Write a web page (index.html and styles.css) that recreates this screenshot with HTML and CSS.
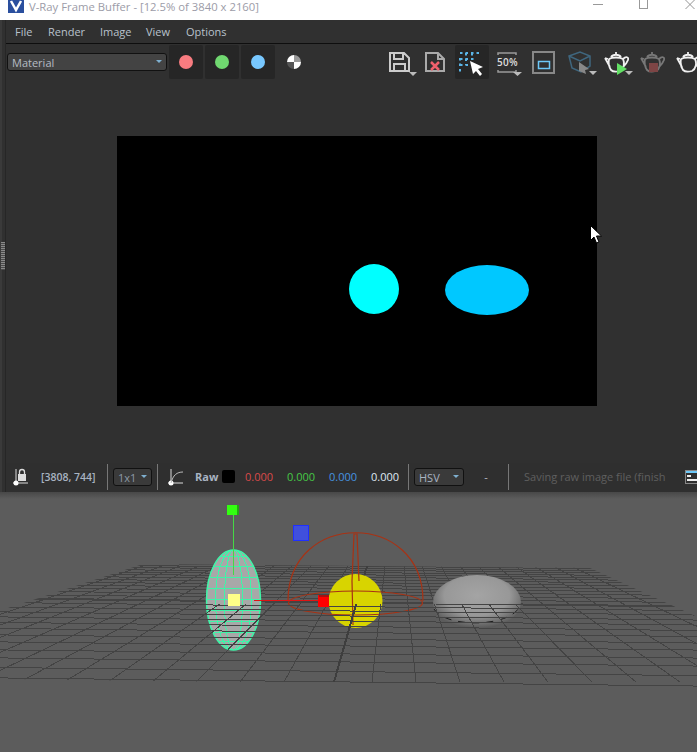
FILE: index.html
```html
<!DOCTYPE html>
<html lang="en">
<head>
<meta charset="utf-8">
<title>V-Ray Frame Buffer</title>
<link rel="stylesheet" href="styles.css">
</head>
<body>
<svg class="defs" width="0" height="0">
	<symbol id="teapot" viewBox="0 0 34 34">
		<path d="M10 14C13 12 21 12 24 14 26 18 25 24 21 26 17 27 14 27 12 25 10 22 9 19 10 14M12 12C14 9 20 9 22 12M17 7v2M6 13l3 1M6 13l5 9M24 14C27 11 30 12 29 15 28 18 26 20 24 22" fill="none" stroke="currentColor" stroke-width="1.800"/>
	</symbol>
	<clipPath id="floor"><polygon points="143,564 590,568 856,690 -200,676"/></clipPath>
	<clipPath id="front"><rect x="0" y="604" width="697" height="148"/></clipPath>
	<clipPath id="egg"><ellipse cx="233.500" cy="600" rx="27" ry="50"/></clipPath>
	<radialGradient id="stone" cx="0.5" cy="0.38" r="0.62">
		<stop offset="0" stop-color="#a4a4a4"/>
		<stop offset="0.6" stop-color="#989898"/>
		<stop offset="1" stop-color="#555"/>
	</radialGradient>
	<g id="grid" clip-path="url(#floor)" fill="none" stroke="#444" shape-rendering="crispEdges">
		<path d="M-10 677.800L710 686.200M-10 667.400L710 675.800M-10 657.800L710 666.200M-10 649.800L710 658.200M-10 641.800L710 650.200M-10 634.800L710 643.200M-10 628.300L710 636.700M-10 622.300L710 630.700M-10 616.800L710 625.200M-10 611.800L710 620.200M-10 606.800L710 615.200M-10 602.400L710 610.800M-10 594.400L710 602.800M-10 590.800L710 599.200M-10 587.400L710 595.800M-10 584.200L710 592.600M-10 581.200L710 589.600M-10 578.300L710 586.700M-10 575.500L710 583.900M-10 572.800L710 581.200M-10 570.500L710 578.900M-10 568.200L710 576.600M-10 565.800L710 574.200M-10 563.800L710 572.200M-10 561.800L710 570.200"/>
		<path d="M-200 682L143 566M-156 682L162 566M-112 682L180 566M-68 682L199 566M-24 682L218 566M20 682L236 566M64 682L255 566M108 682L274 566M152 682L292 566M196 682L311 566M240 682L329 566M284 682L348 566M372 682L385 566M416 682L404 566M460 682L422 566M504 682L441 566M548 682L460 566M592 682L478 566M636 682L497 566M680 682L515 566M724 682L534 566M768 682L553 566M812 682L571 566M856 682L590 566"/>
		<path d="M-10 598.300L710 606.700" stroke-width="2"/>
		<path d="M334 682L367 566" stroke-width="2" stroke="#3e3e3e"/>
	</g>
</svg>

<div class="titlebar">
	<svg class="app_logo" viewBox="0 0 16 13"><rect width="16" height="13" fill="#2a4f9e"/><path d="M3 1l5 9 5-9" fill="none" stroke="#fff" stroke-width="2.500"/></svg>
	<span class="title_text">V-Ray Frame Buffer - [12.5% of 3840 x 2160]</span>
	<div class="win_btns">
		<span class="win_min"></span>
		<span class="win_max"></span>
		<svg class="win_close" viewBox="0 0 10 10"><path d="M0 0l10 10M10 0L0 10" stroke="#888" fill="none"/></svg>
	</div>
</div>

<div class="vfb">
	<div class="side"><span class="grip"></span></div>
	<div class="main">
		<ul class="menu">
			<li>File</li>
			<li>Render</li>
			<li>Image</li>
			<li>View</li>
			<li>Options</li>
		</ul>

		<div class="toolbar">
			<div class="select select_channel">Material<i class="caret"></i></div>
			<div class="btn on"><span class="dot dot_r"></span></div>
			<div class="btn on"><span class="dot dot_g"></span></div>
			<div class="btn on"><span class="dot dot_b"></span></div>
			<div class="btn"><span class="dot dot_mono"></span></div>
			<div class="spacer"></div>

			<!-- save -->
			<div class="btn"><svg class="ico" viewBox="0 0 34 34">
				<path d="M7 8h14l5 5v13H7zM11 8v6h9V8M11 26v-7h11v7" fill="none" stroke="#ccc" stroke-width="2"/>
				<path d="M26 27h8l-4 4z" fill="#bbb"/>
			</svg></div>
			<!-- clear -->
			<div class="btn"><svg class="ico" viewBox="0 0 34 34">
				<path d="M7 8h12l6 6v12H7zM19 8v6h6" fill="none" stroke="#aaa" stroke-width="2"/>
				<path d="M12 17l8 8M20 17l-8 8" stroke="#f0606c" stroke-width="2.500"/>
			</svg></div>
			<!-- region -->
			<div class="btn on"><svg class="ico" viewBox="0 0 34 34">
				<path d="M5 8h22M5 13v15M11 8v12M17 8v6M5 14h15M5 20h8" fill="none" stroke="#5ab4e6" stroke-width="2" stroke-dasharray="2.500 3"/>
				<path d="M15 16l13 6-5 2 4 5-2 2-4-5-3 3z" fill="#fff"/>
			</svg></div>
			<!-- 50% -->
			<div class="btn"><svg class="ico" viewBox="0 0 34 34">
				<path d="M7 10V8h18v2M7 25v2h18v-2" fill="none" stroke="#999" stroke-width="1.500"/>
				<text x="6" y="21" class="ico_text">50%</text>
				<path d="M22 27h9l-4.500 4z" fill="#bbb"/>
			</svg></div>
			<!-- render region -->
			<div class="btn"><svg class="ico" viewBox="0 0 34 34">
				<rect x="6" y="7" width="21" height="21" fill="none" stroke="#888" stroke-width="2"/>
				<rect x="11.500" y="16.500" width="11" height="7" fill="none" stroke="#6cc8f8" stroke-width="1.500"/>
			</svg></div>
			<!-- cube -->
			<div class="btn"><svg class="ico" viewBox="0 0 34 34">
				<path d="M6 11l11-4 10 4v10l-9 6-9-4zM6 11l11 5 10-5" fill="none" stroke="#3f667e" stroke-width="1.500"/>
				<path d="M16 17l10 7-4 1 1 4-7-3z" fill="#888"/>
				<path d="M26 26h8l-4 4z" fill="#bbb"/>
			</svg></div>
			<!-- teapots -->
			<div class="btn"><svg class="ico tea_light"><use href="#teapot"/>
				<path d="M18 18l10 6-10 6z" fill="#62e064"/>
				<path d="M26 26h8l-4 4z" fill="#bbb"/>
			</svg></div>
			<div class="btn"><svg class="ico tea_dim"><use href="#teapot"/>
				<rect x="14" y="18" width="9" height="9" fill="#7d4545"/>
			</svg></div>
			<div class="btn"><svg class="ico tea_light"><use href="#teapot"/></svg></div>
		</div>

		<div class="canvas">
			<svg class="render" viewBox="0 0 480 270">
				<circle cx="257" cy="153" r="25" fill="#00ffff"/>
				<ellipse cx="370" cy="154" rx="42" ry="25" fill="#00c8ff"/>
			</svg>
			<svg class="cursor" viewBox="0 0 12 19"><path d="M.5.5v15l3.500-3.500 2.500 6 2.500-1-2.500-6h5z" fill="#fff" stroke="#000"/></svg>
		</div>

		<div class="status">
			<svg class="st_ico st_lock" viewBox="0 0 16 18">
				<path d="M3 1v14M0 15h15" stroke="#ddd" fill="none"/>
				<circle cx="3" cy="15" r="2.500" fill="#fff"/>
				<rect x="5" y="6" width="8" height="7" fill="#ddd"/>
				<path d="M6.500 6V4a2.500 2.500 0 0 1 5 0v2" fill="none" stroke="#ddd" stroke-width="1.300"/>
			</svg>
			<span class="coord">[3808, 744]</span>
			<span class="sep sep_a"></span>
			<div class="select select_zoom">1x1<i class="caret"></i></div>
			<span class="sep sep_b"></span>
			<svg class="st_ico st_curve" viewBox="0 0 16 18">
				<path d="M3 1v14M0 15h15" stroke="#ddd" fill="none"/>
				<circle cx="3" cy="15" r="2.500" fill="#fff"/>
				<path d="M3 15C5 7 9 4 15 4" stroke="#bbb" fill="none"/>
			</svg>
			<span class="raw">Raw</span>
			<span class="swatch"></span>
			<span class="val val_r">0.000</span>
			<span class="val val_g">0.000</span>
			<span class="val val_b">0.000</span>
			<span class="val val_w">0.000</span>
			<span class="sep sep_c"></span>
			<div class="select select_mode">HSV<i class="caret"></i></div>
			<span class="dash">-</span>
			<span class="sep sep_d"></span>
			<span class="msg">Saving raw image file (finish</span>
			<svg class="st_ico st_log" viewBox="0 0 12 14">
				<rect x=".5" y=".5" width="14" height="13" fill="none" stroke="#888"/>
				<path d="M1 2h11" stroke="#6cc8f8" stroke-width="2"/>
				<path d="M2 6h4M2 10h10" stroke="#eee" stroke-width="2"/>
			</svg>
		</div>
	</div>
</div>

<svg class="viewport" viewBox="0 492 697 260">
	<use href="#grid"/>

	<!-- wire ellipsoid -->
	<ellipse cx="233.500" cy="600" rx="27" ry="50" fill="#a8a8a8" stroke="#3ff5a8" stroke-width="1.500"/>
	<g clip-path="url(#egg)" fill="none" stroke="#3ff5a8" shape-rendering="crispEdges">
		<ellipse cx="233.500" cy="600" rx="18" ry="50"/>
		<ellipse cx="233.500" cy="600" rx="9" ry="50"/>
		<path d="M200 556h70M200 566h70M200 577h70M200 588h70M200 599h70M200 610h70M200 621h70M200 632h70M200 641h70"/>
	</g>

	<!-- light sphere -->
	<circle cx="355.500" cy="601" r="27" fill="#d8d400"/>
	<g fill="none" stroke="#a83214" stroke-width="1.200">
		<path d="M288 601C288 510 423 510 423 601"/>
		<ellipse cx="355.500" cy="603" rx="67" ry="12"/>
		<path d="M353 625L352 581l2-47 3 0 2 47"/>
	</g>

	<!-- stone -->
	<ellipse cx="477" cy="602" rx="44" ry="27" fill="url(#stone)"/>
	<path d="M434 609C445 628 510 628 520 606" fill="none" stroke="#1c1c1c" stroke-dasharray="7 7"/>

	<g clip-path="url(#front)"><use href="#grid"/></g>

	<!-- gizmos -->
	<path d="M233.500 515v60" stroke="#45d845"/>
	<rect x="227" y="505" width="11" height="10" fill="#33ff11"/>
	<rect x="237" y="505" width="2" height="10" fill="#22aa11"/>
	<rect x="293.500" y="525.500" width="15" height="15" fill="#4050dc" stroke="#2030ff"/>
	<path d="M254 600.500h64" stroke="#e01414"/>
	<rect x="318" y="595" width="11" height="12" fill="#ff0000"/>
	<rect x="319" y="595" width="10" height="2" fill="#aa1010"/>
	<rect x="228" y="594" width="12" height="12" fill="#ffff88"/>
</svg>
</body>
</html>
```

FILE: styles.css
```css
* {margin:0; padding:0; box-sizing:border-box}
li {list-style:none}
html, body {height:100%}
body {
	width:697px;
	height:752px;
	overflow:hidden;
	background-color:#5c5c5c;
	font-family:"Open Sans", "Noto Sans", sans-serif;
	font-size:11px;
}
.defs {display:block; height:0}

/* title bar */
.titlebar {
	display:flex;
	height:20px;
	background-color:#fff;
	align-items:flex-start;
}
.app_logo {width:16px; height:13px; margin-left:8px; flex:none}
.title_text {
	margin-left:5px;
	font-size:11.300px;
	line-height:13px;
	color:#9c9ca8;
	white-space:nowrap;
}
.win_btns {flex:1; display:flex; justify-content:flex-end; align-items:flex-start; padding-right:2px}
.win_min {width:10px; height:1px; margin-top:4px; background-color:#999}
.win_max {width:9px; height:9px; margin-left:36px; border:1px solid #999; border-top:0}
.win_close {width:10px; height:9px; margin-left:37px}

.vfb {display:flex; height:472px; background-color:#303030}
.side {
	width:6px;
	flex:none;
	display:flex;
	align-items:center;
	border-left:2px solid #3a3a3a;
	border-right:1px solid #262626;
}
.grip {
	display:block;
	width:4px;
	height:28px;
	margin-left:-1px;
	background:repeating-linear-gradient(#8a8a8a 0 1px, #4a4a4a 1px 2px);
}
.main {flex:1; min-width:0; display:flex; flex-direction:column; overflow:hidden}

/* menu */
.menu {
	display:flex;
	height:24px;
	padding-left:9px;
	border-bottom:1px solid #0e0e0e;
	line-height:23px;
	color:#b9c2cc;
}
.menu li:nth-child(1) {width:33px}
.menu li:nth-child(2) {width:52px}
.menu li:nth-child(3) {width:46px}
.menu li:nth-child(4) {width:40px}

/* toolbar */
.toolbar {
	display:flex;
	flex:none;
	width:712px;
	height:36px;
	gap:2px;
	align-items:center;
	padding-left:1px;
}
.select {
	position:relative;
	height:18px;
	line-height:17px;
	padding-left:4px;
	border:1px solid #111;
	border-radius:3px;
	background-color:#434343;
	color:#b5bcc4;
	flex:none;
}
.select_channel {width:160px}
.caret {
	position:absolute;
	right:4px;
	top:6px;
	border:3.500px solid transparent;
	border-top-color:#7fb0d0;
	border-bottom:0;
}
.btn {
	width:34px;
	height:34px;
	flex:none;
	display:flex;
	align-items:center;
	justify-content:center;
	border-radius:2px;
}
.btn.on {background-color:#262626}
.dot {width:14px; height:14px; border-radius:50%}
.dot_r {background-color:#f87c80}
.dot_g {background-color:#70d870}
.dot_b {background-color:#78c8ff}
.dot_mono {background:conic-gradient(#999 0 90deg, #fff 90deg 180deg, #555 180deg 270deg, #fff 270deg)}
.spacer {width:68px; flex:none}
.ico {width:34px; height:34px; display:block; overflow:visible}
.ico_text {font-family:"Open Sans", sans-serif; font-size:10px; font-weight:600; letter-spacing:.3px; fill:#ddd}
.tea_light {color:#f0f0f0}
.tea_dim {color:#777}

/* render */
.canvas {
	position:relative;
	flex:1;
	display:flex;
	align-items:center;
	padding-left:111px;
	padding-bottom:2px;
}
.render {width:480px; height:270px; background-color:#000; display:block}
.cursor {position:absolute; left:584px; top:145px; width:12px; height:19px}

/* status bar */
.status {
	display:flex;
	flex:none;
	height:29px;
	padding-bottom:2px;
	align-items:center;
	color:#b5bcc4;
	white-space:nowrap;
	background-color:#2f2f2f;
}
.st_ico {flex:none; display:block; overflow:visible}
.st_lock {width:16px; height:18px; margin-left:7px}
.coord {margin-left:12px; width:66px; font-size:10.500px; font-weight:600; color:#a9b4c2}
.sep {width:1px; height:26px; background-color:#777; flex:none}
.sep_a {margin-right:5px}
.sep_b {margin-left:5px}
.select_zoom {width:39px; background-color:#3a3a3a; color:#8d99a6}
.select_mode {width:50px; margin-left:5px; background-color:#3a3a3a; color:#a9b4c2}
.st_curve {width:16px; height:18px; margin-left:10px}
.raw {margin-left:11px; width:27px; font-weight:700; color:#a9b4c2}
.swatch {width:13px; height:13px; background-color:#000; border-radius:2px; flex:none}
.val {width:42px}
.val_r {margin-left:10px; color:#d94a4a}
.val_g {color:#46c846}
.val_b {color:#4694e0}
.val_w {width:37px; color:#dfe8f2}
.dash {width:44px; text-align:center}
.sep_d {margin-right:15px}
.msg {width:141px; color:#5f5f5f; flex:none}
.st_log {width:12px; height:14px; margin-left:20px}

.viewport {
	display:block;
	width:697px;
	height:260px;
	background:linear-gradient(#484848, #5c5c5c 7px);
}
```
